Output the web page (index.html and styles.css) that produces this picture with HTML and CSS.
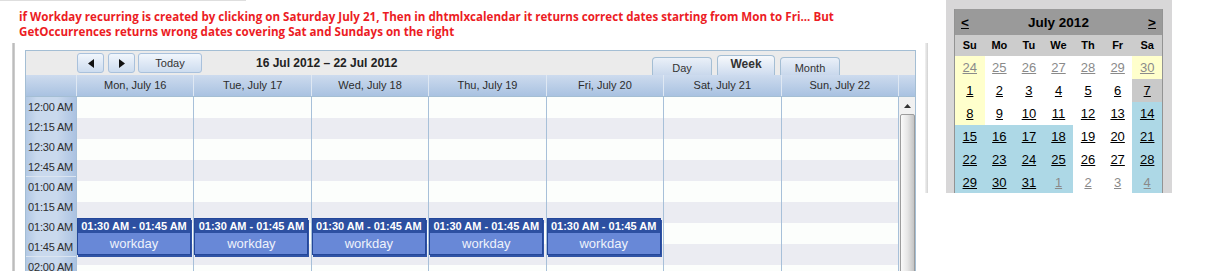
FILE: index.html
```html
<!DOCTYPE html>
<html lang="en">
<head>
  <meta charset="UTF-8" />
  <title>Workday recurring</title>
  <link rel="stylesheet" href="styles.css">
</head>
<body>
  <div class="screen">
    <div class="main">
      <div class="topline"></div>
      <p class="msg">if Workday recurring is created by clicking on Saturday July 21, Then in dhtmlxcalendar it returns correct dates starting from Mon to Fri... But<br>GetOccurrences returns wrong dates covering Sat and Sundays on the right</p>

      <div class="frame">
        <div class="rail"></div>
        <div class="scheduler">
          <div class="nav">
            <span class="nbtn arrow"><svg width="6" height="9" viewBox="0 0 6 9"><polygon points="6,0 6,9 0,4.5" fill="#111"/></svg></span>
            <span class="nbtn arrow"><svg width="6" height="9" viewBox="0 0 6 9"><polygon points="0,0 0,9 6,4.5" fill="#111"/></svg></span>
            <span class="nbtn today">Today</span>
            <span class="range">16 Jul 2012 &ndash; 22 Jul 2012</span>
            <div class="tabs">
              <span class="tab">Day</span>
              <span class="tab active">Week</span>
              <span class="tab">Month</span>
            </div>
          </div>

          <div class="hdr">
            <div class="hcell first"></div>
            <div class="hcell">Mon, July 16</div>
            <div class="hcell">Tue, July 17</div>
            <div class="hcell">Wed, July 18</div>
            <div class="hcell">Thu, July 19</div>
            <div class="hcell">Fri, July 20</div>
            <div class="hcell">Sat, July 21</div>
            <div class="hcell">Sun, July 22</div>
            <div class="hcell"></div>
          </div>

          <div class="grid">
            <div class="times">
              <div class="hour">
                <div>12:00 AM</div><div>12:15 AM</div><div>12:30 AM</div><div>12:45 AM</div>
              </div>
              <div class="hour">
                <div>01:00 AM</div><div>01:15 AM</div><div>01:30 AM</div><div>01:45 AM</div>
              </div>
              <div class="hour">
                <div>02:00 AM</div>
              </div>
            </div>
            <div class="day">
              <div class="ev"><div class="ev-hd">01:30 AM - 01:45 AM</div><div class="ev-bd">workday</div></div>
            </div>
            <div class="day">
              <div class="ev"><div class="ev-hd">01:30 AM - 01:45 AM</div><div class="ev-bd">workday</div></div>
            </div>
            <div class="day">
              <div class="ev"><div class="ev-hd">01:30 AM - 01:45 AM</div><div class="ev-bd">workday</div></div>
            </div>
            <div class="day">
              <div class="ev"><div class="ev-hd">01:30 AM - 01:45 AM</div><div class="ev-bd">workday</div></div>
            </div>
            <div class="day">
              <div class="ev"><div class="ev-hd">01:30 AM - 01:45 AM</div><div class="ev-bd">workday</div></div>
            </div>
            <div class="day"></div>
            <div class="day"></div>
            <div class="scroll">
              <div class="up"><svg width="7" height="4" viewBox="0 0 7 4"><polygon points="0,4 7,4 3.5,0" fill="#333"/></svg></div>
              <div class="thumb"></div>
            </div>
          </div>
        </div>
        <div class="edge"></div>
      </div>
    </div>

    <div class="cal">
      <div class="cal-in">
        <div class="cal-title"><u>&lt;</u><span>July 2012</span><u>&gt;</u></div>
        <div class="cal-grid">
          <div class="wd">Su</div><div class="wd">Mo</div><div class="wd">Tu</div><div class="wd">We</div><div class="wd">Th</div><div class="wd">Fr</div><div class="wd">Sa</div>

          <div class="d yel other">24</div><div class="d other">25</div><div class="d other">26</div><div class="d other">27</div><div class="d other">28</div><div class="d other">29</div><div class="d yel other">30</div>

          <div class="d yel">1</div><div class="d">2</div><div class="d">3</div><div class="d">4</div><div class="d">5</div><div class="d">6</div><div class="d sel">7</div>

          <div class="d yel">8</div><div class="d">9</div><div class="d">10</div><div class="d">11</div><div class="d">12</div><div class="d">13</div><div class="d blue">14</div>

          <div class="d blue">15</div><div class="d blue">16</div><div class="d blue">17</div><div class="d blue">18</div><div class="d">19</div><div class="d">20</div><div class="d blue">21</div>

          <div class="d blue">22</div><div class="d blue">23</div><div class="d blue">24</div><div class="d blue">25</div><div class="d">26</div><div class="d">27</div><div class="d blue">28</div>

          <div class="d blue">29</div><div class="d blue">30</div><div class="d blue">31</div><div class="d blue other">1</div><div class="d other">2</div><div class="d other">3</div><div class="d blue other">4</div>
        </div>
      </div>
    </div>
  </div>
</body>
</html>
```

FILE: styles.css
```css
body {
  margin: 0;
  background: #fff;
  font-family: "Liberation Sans", Arial, sans-serif;
  color: #2b2b2b;
}
.screen {
  display: flex;
  height: 271px;
  overflow: hidden;
}
.main {
  width: 946px;
  display: flex;
  flex-direction: column;
}
.topline {
  flex-shrink: 0;
  width: 246px;
  height: 1px;
  background: #dedede;
}
.msg {
  flex-shrink: 0;
  margin: 0;
  height: 42px;
  box-sizing: border-box;
  padding: 8px 0 0 19px;
  font-family: "Open Sans", "Liberation Sans", sans-serif;
  font-weight: bold;
  font-size: 11.6px;
  line-height: 15px;
  color: #ec1c24;
}

/* frame with scheduler */
.frame {
  flex: 1;
  display: flex;
  align-items: flex-start;
}
.rail {
  align-self: stretch;
  width: 3px;
  margin-left: 12px;
  background: linear-gradient(to right, #dadada, #bcbcbc, #d4d4d4);
}
.edge {
  width: 3px;
  height: 150px;
  margin-left: 9px;
  background: linear-gradient(to right, #f2f2f2, #d2d2d2);
}
.scheduler {
  width: 891px;
  margin: 7px 0 0 10px;
  border: 1px solid #a4bed4;
  box-sizing: border-box;
  font-size: 11px;
}

.nav {
  height: 24px;
  display: flex;
  align-items: flex-start;
  padding-left: 51px;
  background: #ebebeb;
}
.nbtn {
  display: flex;
  align-items: center;
  justify-content: center;
  height: 18px;
  margin-top: 2px;
  border: 1px solid #a9c1dc;
  border-radius: 3px;
  background: linear-gradient(#f1f6fc, #cddcef);
}
.arrow {
  width: 25px;
  margin-right: 4px;
}
.arrow + .arrow {
  margin-right: 3px;
}
.today {
  width: 62px;
  color: #333;
}
.range {
  align-self: center;
  margin-left: 54px;
  font-size: 12px;
  font-weight: bold;
  color: #222;
}
.tabs {
  margin-left: auto;
  align-self: flex-end;
  display: flex;
  align-items: flex-end;
  gap: 5px;
  padding-right: 75px;
}
.tab {
  width: 58px;
  height: 17px;
  line-height: 20px;
  text-align: center;
  border: 1px solid #a4bed4;
  border-bottom: none;
  border-radius: 4px 4px 0 0;
  background: linear-gradient(#eaf0f8, #c9d8ec);
  color: #333;
}
.tab.active {
  width: 56px;
  height: 19px;
  line-height: 17px;
  font-weight: bold;
  font-size: 12px;
  background: linear-gradient(#f7f9fc, #cedcef);
}

.hdr {
  display: grid;
  grid-template-columns: 50px repeat(7, 1fr) 17px;
  height: 21px;
  border-bottom: 1px solid #a4bed4;
  background: linear-gradient(#cddbee, #a9c2e1);
}
.hcell {
  line-height: 21px;
  text-align: center;
  border-left: 1px solid #dfe8f3;
  color: #2c2c2c;
}
.hcell.first {
  border-left: none;
}

.grid {
  display: grid;
  grid-template-columns: 50px repeat(7, 1fr) 17px;
  height: 180px;
}
.times {
  background: linear-gradient(to right, #b2c8e4 0, #c9d9ed 22%, #c9d9ed 62%, #abc2e1 100%);
}
.hour {
  height: 80px;
  box-sizing: border-box;
  border-bottom: 1px solid #dbe5f1;
}
.hour div {
  height: 20px;
  line-height: 20px;
  text-align: right;
  padding-right: 3px;
  letter-spacing: -0.2px;
  color: #2d2d2d;
}
.day {
  position: relative;
  border-left: 1px solid #a7c0d9;
  background: repeating-linear-gradient(#fcfefc 0 21px, #ebecf2 21px 42px);
}
.ev {
  position: absolute;
  top: 121px;
  left: 0;
  width: 112px;
  border: 1px solid #24479a;
  box-shadow: 1px 2px 0 #2f53a5;
}
.ev-hd {
  height: 14px;
  line-height: 15px;
  text-align: center;
  background: #2d50a1;
  color: #fff;
  font-weight: bold;
}
.ev-bd {
  height: 21px;
  line-height: 21px;
  text-align: center;
  background: #6888d7;
  color: #eef2fb;
  font-size: 13px;
}
.scroll {
  border-left: 1px solid #a7c0d9;
  background: #f1f1f1;
}
.up {
  height: 17px;
  display: flex;
  align-items: center;
  justify-content: center;
}
.thumb {
  height: 200px;
  margin-left: 1px;
  border: 1px solid #9c9c9c;
  border-radius: 2px;
  background: linear-gradient(to right, #fafafa, #e6e6e6 50%, #c4c4c4);
}

/* mini calendar */
.cal {
  width: 226px;
  height: 193px;
  box-sizing: border-box;
  padding: 9px 9px 0 8px;
  background: #d8d7d8;
  overflow: hidden;
}
.cal-in {
  height: 100%;
  border-left: 1px solid #939393;
  border-right: 1px solid #939393;
  background: #fff;
  color: #000;
}
.cal-title {
  height: 26px;
  display: flex;
  align-items: center;
  justify-content: space-between;
  padding: 0 6px;
  background: #9a9a9a;
  font-weight: bold;
  font-size: 13.5px;
}
.cal-grid {
  display: grid;
  grid-template-columns: repeat(7, 1fr);
}
.wd {
  height: 21px;
  line-height: 21px;
  text-align: center;
  background: #cccccc;
  font-weight: bold;
  font-size: 11px;
}
.d {
  height: 23px;
  line-height: 23px;
  text-align: center;
  font-size: 13px;
  text-decoration: underline;
}
.d.other {
  color: #8a8a8a;
}
.d.yel {
  background: #ffffcc;
}
.d.blue {
  background: #add8e6;
}
.d.sel {
  background: #c9c9c9;
}
```
